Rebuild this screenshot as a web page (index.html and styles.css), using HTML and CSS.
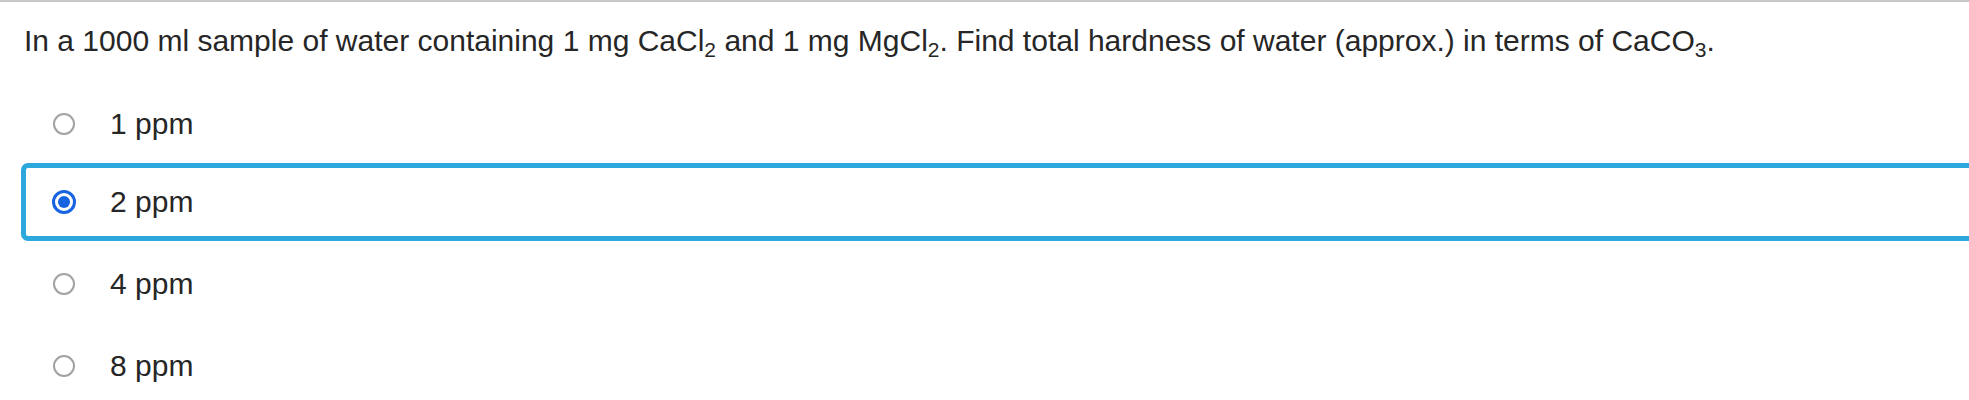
FILE: index.html
```html
<!DOCTYPE html>
<html lang="en">
<head>
<meta charset="utf-8">
<title>Question</title>
<link rel="stylesheet" href="styles.css">
</head>
<body>
<div class="page">
  <p class="question">In a 1000 ml sample of water containing 1 mg CaCl<sub>2</sub> and 1 mg MgCl<sub>2</sub>. Find total hardness of water (approx.) in terms of CaCO<sub>3</sub>.</p>
  <div class="options">
    <label class="option"><span class="radio"></span><span class="label">1 ppm</span></label>
    <label class="option selected"><span class="radio checked"></span><span class="label">2 ppm</span></label>
    <label class="option"><span class="radio"></span><span class="label">4 ppm</span></label>
    <label class="option"><span class="radio"></span><span class="label">8 ppm</span></label>
  </div>
</div>
</body>
</html>
```
FILE: styles.css
```css
html, body {
  margin: 0;
  padding: 0;
  background: #ffffff;
}
body {
  font-family: "Liberation Sans", Arial, sans-serif;
  color: #262626;
  overflow: hidden;
}
.page {
  border-top: 2px solid #c8c8c8;
  width: 2020px;
}
.question {
  margin: 0;
  padding: 21px 0 0 24px;
  font-size: 30px;
  line-height: 36px;
  white-space: nowrap;
}
.question sub {
  font-size: 21px;
  line-height: 0;
  vertical-align: -6px;
}
.options {
  display: flex;
  flex-direction: column;
  padding: 26px 0 0 21px;
}
.option {
  display: flex;
  align-items: center;
  height: 78px;
  box-sizing: border-box;
  border: 5px solid transparent;
  border-radius: 7px;
  padding-left: 27px;
  font-size: 30px;
  line-height: 36px;
}
.selected ~ .option {
  margin-top: 4px;
}
.option.selected {
  border-color: #2da8dc;
}
.radio {
  width: 22px;
  height: 22px;
  box-sizing: border-box;
  border: 2.5px solid #a2a2a6;
  border-radius: 50%;
  flex: none;
  display: flex;
  align-items: center;
  justify-content: center;
}
.radio.checked {
  width: 24px;
  height: 24px;
  margin-left: -1px;
  margin-right: -1px;
  border: 3px solid #1863e0;
}
.radio.checked::after {
  content: "";
  width: 12px;
  height: 12px;
  border-radius: 50%;
  background: #1863e0;
}
.label {
  margin-left: 35px;
}
```
